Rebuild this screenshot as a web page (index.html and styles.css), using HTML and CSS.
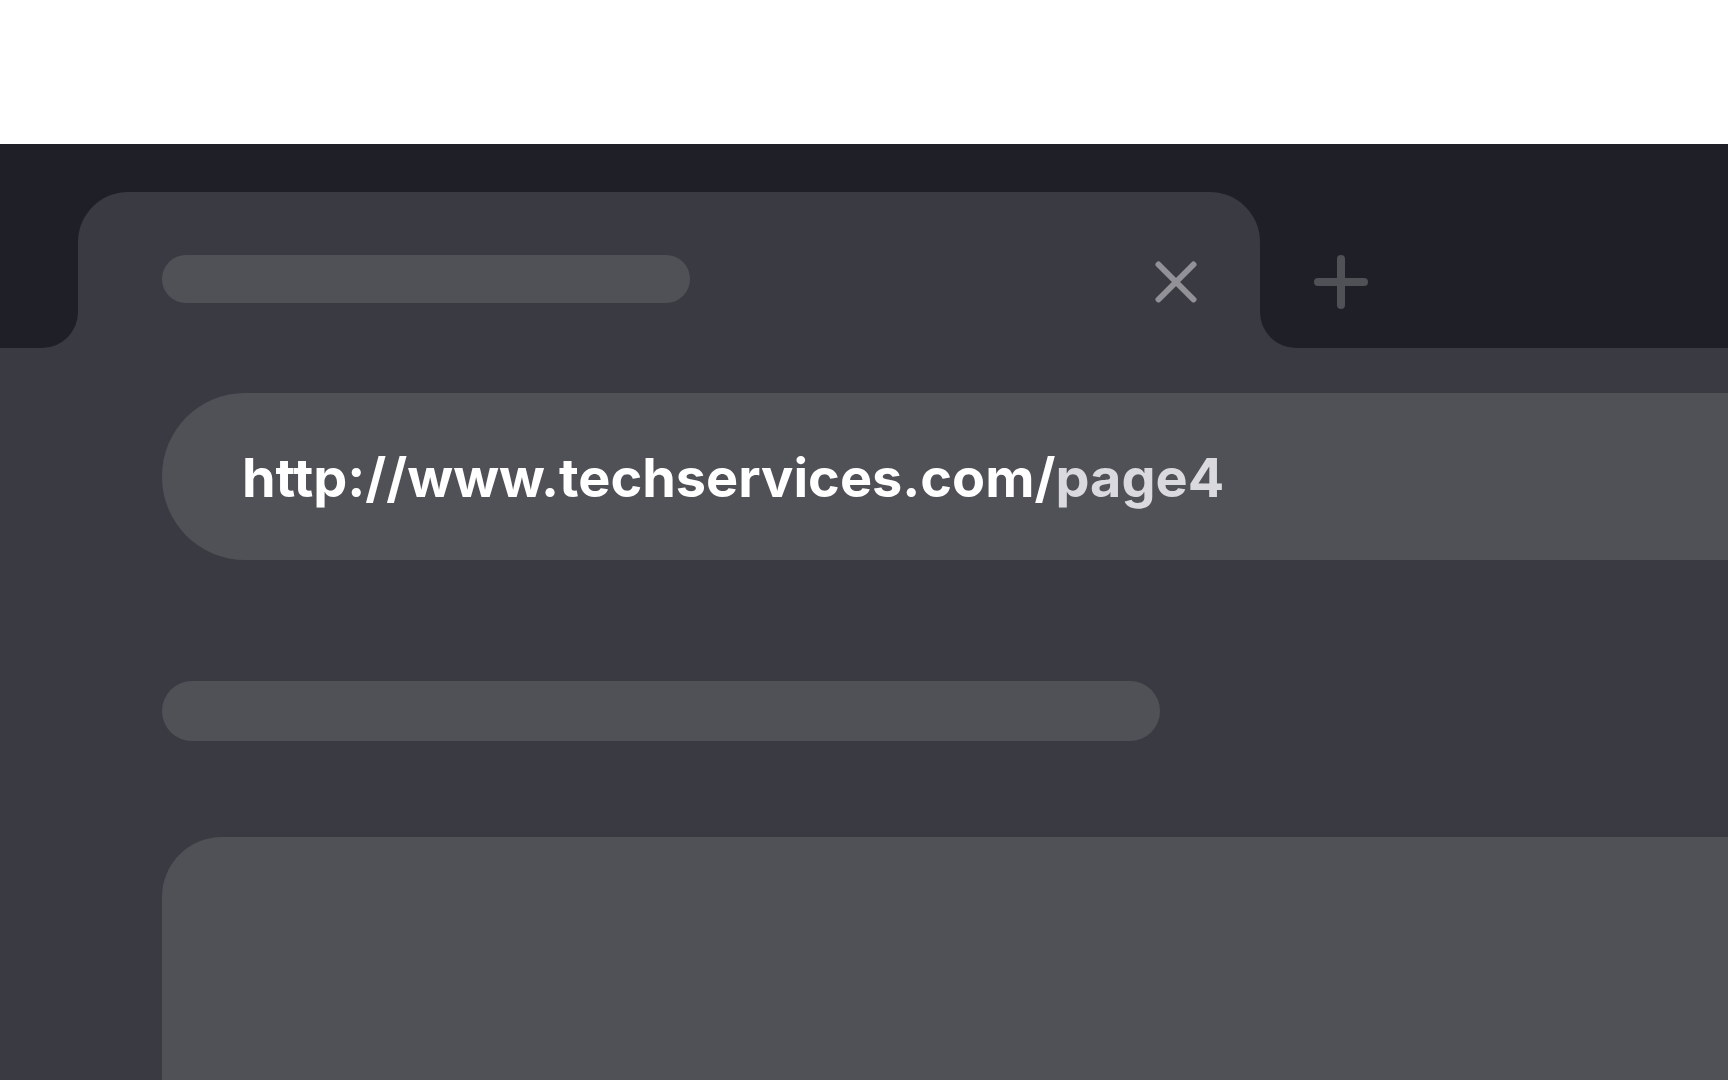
FILE: index.html
```html
<!DOCTYPE html>
<html lang="en">
<head>
    <meta charset="UTF-8">
    <meta name="viewport" content="width=device-width, initial-scale=1.0">
    <title>Browser</title>
    <link rel="stylesheet" href="styles.css">
</head>
<body>
    <div class="top-space"></div>
    <div class="tab-strip">
        <div class="strip-left"></div>
        <div class="tab-slot">
            <div class="tab">
                <div class="tab-title"></div>
                <svg class="tab-close" width="42" height="42" viewBox="0 0 42 42">
                    <path d="M3.5 3.5 L38.5 38.5 M38.5 3.5 L3.5 38.5" stroke="#919197" stroke-width="6" stroke-linecap="round" fill="none"/>
                </svg>
            </div>
        </div>
        <div class="strip-right">
            <svg class="new-tab" width="54" height="54" viewBox="0 0 54 54">
                <path d="M27 4 V50 M4 27 H50" stroke="#505157" stroke-width="8" stroke-linecap="round" fill="none"/>
            </svg>
        </div>
    </div>
    <div class="page">
        <div class="address-bar">
            <span class="url">http://www.techservices.com/<span class="url-path">page4</span></span>
        </div>
        <div class="line-block"></div>
        <div class="content-box"></div>
    </div>
</body>
</html>
```

FILE: styles.css
```css
html, body {
    margin: 0;
    padding: 0;
    height: 100%;
    overflow: hidden;
}
body {
    font-family: Inter, "Noto Sans", Arial, sans-serif;
    background-color: #ffffff;
    display: flex;
    flex-direction: column;
}
.top-space {
    height: 144px;
    flex-shrink: 0;
}
.tab-strip {
    display: flex;
    height: 204px;
    flex-shrink: 0;
    background-color: #3a3a43;
}
.strip-left {
    width: 78px;
    background-color: #1f1f28;
    border-bottom-right-radius: 36px;
}
.tab-slot {
    width: 1182px;
    background-color: #1f1f28;
    display: flex;
    flex-direction: column;
}
.tab {
    margin-top: 48px;
    flex: 1;
    background-color: #3a3a43;
    border-radius: 50px 50px 0 0;
    display: flex;
    align-items: flex-start;
    justify-content: space-between;
    padding: 63px 63px 0 84px;
}
.tab-title {
    width: 528px;
    height: 48px;
    border-radius: 24px;
    background-color: #505157;
}
.tab-close {
    margin-top: 6px;
}
.strip-right {
    flex: 1;
    background-color: #1f1f28;
    border-bottom-left-radius: 36px;
    padding: 111px 0 0 54px;
}
.page {
    flex: 1;
    background-color: #3a3a43;
    padding: 45px 0 0 162px;
    display: flex;
    flex-direction: column;
}
.address-bar {
    height: 167px;
    flex-shrink: 0;
    background-color: #505157;
    border-radius: 83px 0 0 83px;
    display: flex;
    align-items: center;
    padding-left: 80px;
}
.url {
    font-size: 54px;
    font-weight: 700;
    color: #ffffff;
    margin-top: 2px;
}
.url-path {
    color: #d9d9de;
}
.line-block {
    width: 998px;
    height: 60px;
    border-radius: 30px;
    background-color: #505157;
    margin-top: 121px;
    flex-shrink: 0;
}
.content-box {
    margin-top: 96px;
    flex: 1;
    background-color: #505157;
    border-top-left-radius: 60px;
}
```
